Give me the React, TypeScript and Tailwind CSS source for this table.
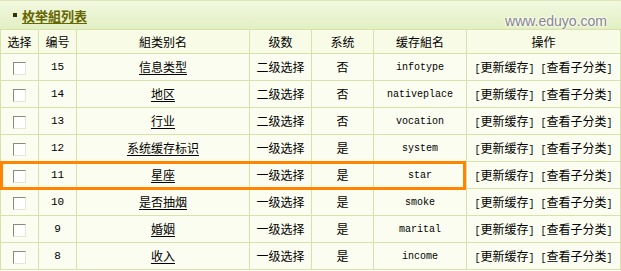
import React from 'react';

type Row = {
  id: number;
  name: string;
  level: string;
  sys: string;
  key: string;
};

const rows: Row[] = [
  { id: 15, name: '信息类型', level: '二级选择', sys: '否', key: 'infotype' },
  { id: 14, name: '地区', level: '二级选择', sys: '否', key: 'nativeplace' },
  { id: 13, name: '行业', level: '二级选择', sys: '否', key: 'vocation' },
  { id: 12, name: '系统缓存标识', level: '一级选择', sys: '是', key: 'system' },
  { id: 11, name: '星座', level: '一级选择', sys: '是', key: 'star' },
  { id: 10, name: '是否抽烟', level: '一级选择', sys: '是', key: 'smoke' },
  { id: 9, name: '婚姻', level: '一级选择', sys: '是', key: 'marital' },
  { id: 8, name: '收入', level: '一级选择', sys: '是', key: 'income' },
];

const cjk = "font-['SimSun','Noto_Sans_CJK_SC',sans-serif]";
const cell = 'border border-[#d6e2aa] text-center p-0';
const mono = "font-['Liberation_Mono',monospace] text-[10px]";

function Checkbox() {
  return (
    <span className="inline-block w-[13px] h-[13px] bg-white border border-t-[#8a8a80] border-l-[#8a8a80] border-b-[#e8e4dc] border-r-[#e8e4dc] align-middle" />
  );
}

function Action({ label }: { label: string }) {
  return (
    <span>
      <span className={mono}>[</span>
      {label}
      <span className={mono}>]</span>
    </span>
  );
}

export default function App() {
  return (
    <div className={`relative w-[621px] h-[271px] bg-white text-[12px] text-black ${cjk}`}>
      <div className="h-[29px] flex items-center justify-between bg-gradient-to-b from-[#f1f8e0] to-[#e2efc2] border-t border-[#dbe8b8] pl-[13px] pr-[14px]">
        <div className="flex items-center gap-[5px]">
          <span className="w-[4px] h-[4px] bg-[#333300]" />
          <span className="text-[13px] font-bold text-[#666600] underline underline-offset-2 leading-none">
            枚举組列表
          </span>
        </div>
        <span className="mt-[12px] text-[14px] leading-none font-['Liberation_Sans',sans-serif] text-[#858585] [text-shadow:0_0_1px_#fff,0_0_2px_#fff,0_0_3px_#fff,0_0_3px_#fff]">
          www.eduyo.com
        </span>
      </div>
      <table className="w-[621px] border-collapse table-fixed">
        <colgroup>
          <col className="w-[38px]" />
          <col className="w-[38px]" />
          <col className="w-[173px]" />
          <col className="w-[62px]" />
          <col className="w-[62px]" />
          <col className="w-[93px]" />
          <col />
        </colgroup>
        <thead>
          <tr className="h-[24px] bg-[#f8fbe6]">
            <th className={`${cell} font-normal`}>选择</th>
            <th className={`${cell} font-normal`}>编号</th>
            <th className={`${cell} font-normal`}>組类别名</th>
            <th className={`${cell} font-normal`}>级数</th>
            <th className={`${cell} font-normal`}>系统</th>
            <th className={`${cell} font-normal`}>缓存組名</th>
            <th className={`${cell} font-normal`}>操作</th>
          </tr>
        </thead>
        <tbody>
          {rows.map((r) => (
            <tr key={r.id} className="h-[27px] bg-[#fbfdf1]">
              <td className={cell}>
                <Checkbox />
              </td>
              <td className={`${cell} font-['Liberation_Mono',monospace] text-[11px]`}>{r.id}</td>
              <td className={cell}>
                <span className="underline underline-offset-2">{r.name}</span>
              </td>
              <td className={cell}>{r.level}</td>
              <td className={cell}>{r.sys}</td>
              <td className={`${cell} ${mono}`}>{r.key}</td>
              <td className={cell}>
                <Action label="更新缓存" />
                <span className={mono}> </span>
                <Action label="查看子分类" />
              </td>
            </tr>
          ))}
        </tbody>
      </table>
      <div className="absolute left-0 top-[161px] w-[466px] h-[29px] border-[3px] border-[#ff8400] pointer-events-none" />
    </div>
  );
}
